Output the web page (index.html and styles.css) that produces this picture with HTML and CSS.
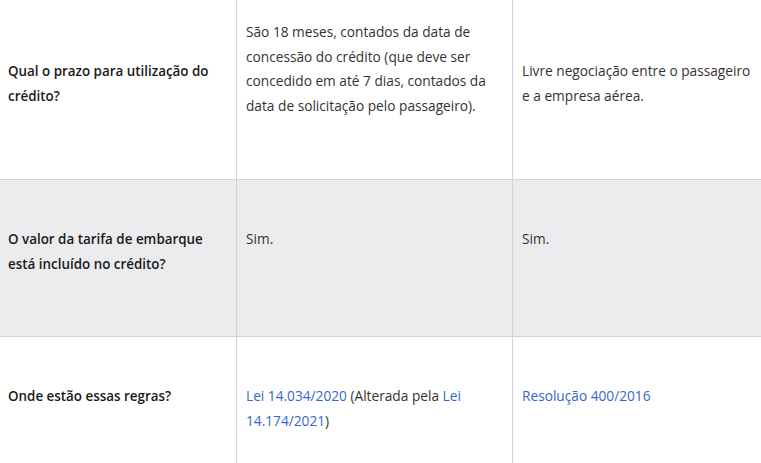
FILE: index.html
```html
<!DOCTYPE html>
<html lang="pt-BR">
<head>
<meta charset="utf-8">
<title>Crédito</title>
<link rel="stylesheet" href="styles.css">
</head>
<body>
<div class="table">
  <div class="row row-1">
    <div class="cell head"><p>Qual o prazo para utilização do crédito?</p></div>
    <div class="cell mid long"><p>São 18 meses, contados da data de concessão do crédito (que deve ser concedido em até 7 dias, contados da data de solicitação pelo passageiro).</p></div>
    <div class="cell last"><p>Livre negociação entre o passageiro e a empresa aérea.</p></div>
  </div>
  <div class="row row-2 shaded">
    <div class="cell head"><p>O valor da tarifa de embarque está incluído no crédito?</p></div>
    <div class="cell mid"><p>Sim.</p></div>
    <div class="cell last"><p>Sim.</p></div>
  </div>
  <div class="row row-3">
    <div class="cell head"><p>Onde estão essas regras?</p></div>
    <div class="cell mid"><p><a href="#">Lei 14.034/2020</a> (Alterada pela <a href="#">Lei 14.174/2021</a>)</p></div>
    <div class="cell last"><p><a href="#">Resolução 400/2016</a></p></div>
  </div>
</div>
</body>
</html>
```

FILE: styles.css
```css
html, body {
  margin: 0;
  padding: 0;
  background: #ffffff;
}
body {
  font-family: "Open Sans", "Liberation Sans", sans-serif;
  font-size: 13.7px;
  line-height: 24.5px;
  color: #333333;
}
.table {
  display: flex;
  flex-direction: column;
  width: 761px;
}
.row {
  display: grid;
  grid-template-columns: 237px 276px 1fr;
  border-bottom: 1px solid #d4d4d8;
}
.row-1 { height: 179px; }
.row-2 { height: 156px; }
.row-3 { height: 140px; border-bottom: none; }
.shaded { background: #ececee; }
.cell {
  border-right: 1px solid #d4d4d8;
  padding-left: 9px;
  padding-right: 8px;
}
.cell.head {
  padding-left: 8px;
  padding-right: 12px;
  font-size: 13.4px;
  font-weight: 600;
  color: #1a1a1a;
}
.cell.last { border-right: none; }
.cell p { margin: 0; }
.row-1 .cell { padding-top: 59px; }
.row-1 .cell.long { padding-top: 20px; }
.row-2 .cell { padding-top: 47px; }
.row-3 .cell { padding-top: 47px; }
a {
  color: #3466cc;
  text-decoration: none;
}
```
